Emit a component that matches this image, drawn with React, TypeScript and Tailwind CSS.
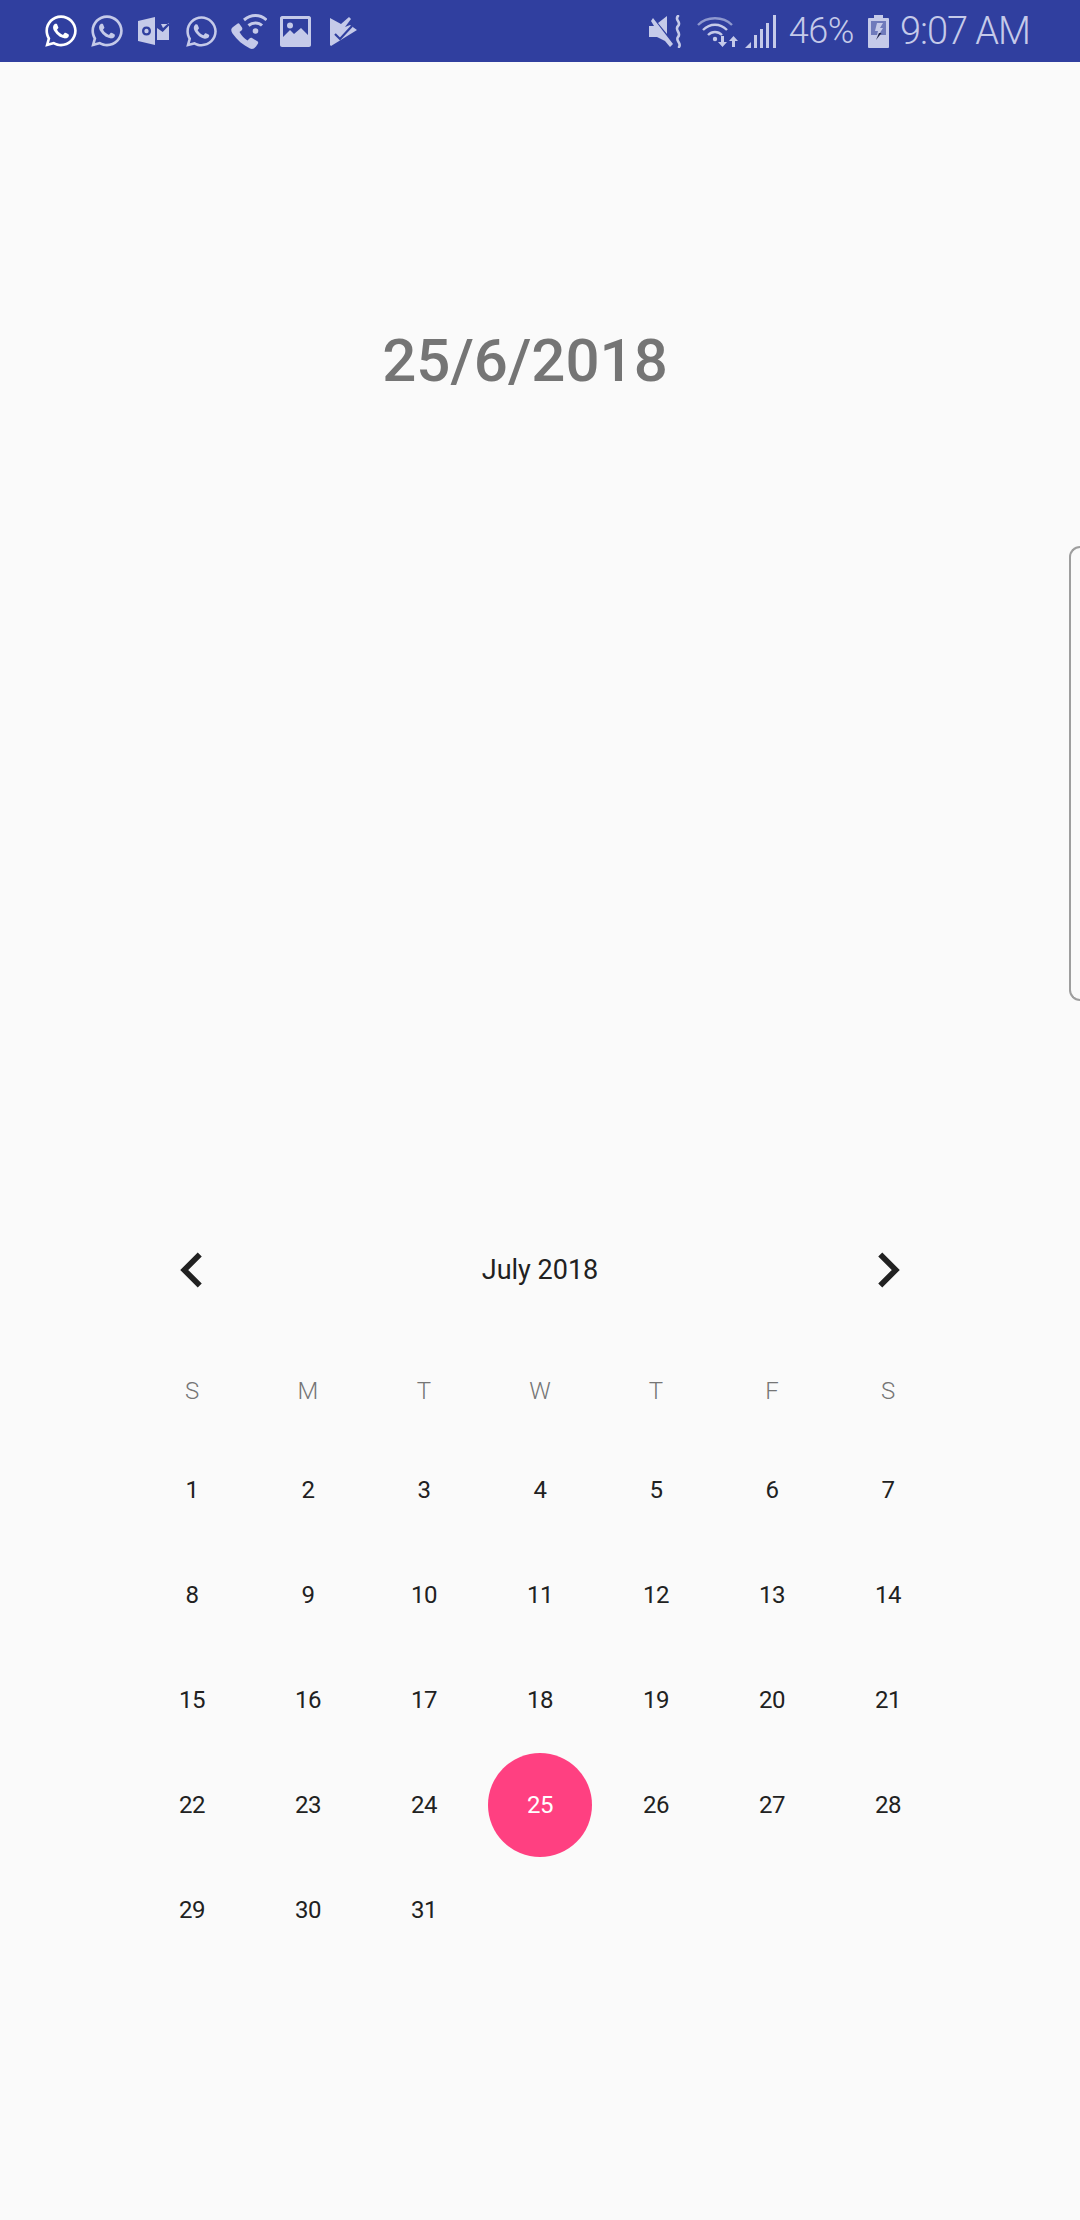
import { FaWhatsapp } from "react-icons/fa";
import { ChevronLeft, ChevronRight } from "lucide-react";

const weekDays = ["S", "M", "T", "W", "T", "F", "S"];
const days = Array.from({ length: 31 }, (_, i) => i + 1);

const OutlookIcon = () => (
  <svg viewBox="0 0 31 28" className="w-[31px] h-[28px] ml-[13px]">
    <path fill="#c5cae9" fillRule="evenodd" d="M0 4 L17 0 V28 L0 24 Z M8.5 9.5 C5.5 9.5 4 11.5 4 14 C4 16.5 5.5 18.5 8.5 18.5 C11.5 18.5 13 16.5 13 14 C13 11.5 11.5 9.5 8.5 9.5 Z M8.5 11.7 C10 11.7 10.6 12.7 10.6 14 C10.6 15.3 10 16.3 8.5 16.3 C7 16.3 6.4 15.3 6.4 14 C6.4 12.7 7 11.7 8.5 11.7 Z" />
    <path fill="#c5cae9" d="M19 7 H23 L25 11 L30 6.5 H31 V23 H19 V11 L24.7 15 L31 8.5 V7 Z" />
  </svg>
);

const WifiCallIcon = () => (
  <svg viewBox="0 0 36 36" className="w-[36px] h-[36px] ml-[12px]">
    <path fill="#c5cae9" d="M6 11 L2 14 C-0.5 16 0 18 1.5 20.5 C6 27 12 32 19 35.5 C21 36.5 23 36 25 33.5 L27 30.5 C27.5 29.5 27 28.5 26 28 L21 25 C20 24.5 19 25 18 26 L16.5 27.5 C13 25.5 10.5 22.5 8.5 19 L10.5 17.5 C11.5 16.5 11.5 15.5 11 14.5 L8.5 11 C8 10 7 10 6 11 Z" />
    <path fill="none" stroke="#c5cae9" strokeWidth="3" d="M13 7 C20 1 29 1 35.5 7" />
    <path fill="none" stroke="#c5cae9" strokeWidth="3" d="M17.5 12.5 C21.5 9 27.5 9 31 12.5" />
    <circle cx="24.5" cy="18" r="2.8" fill="#c5cae9" />
  </svg>
);

const ImageIcon = () => (
  <svg viewBox="0 0 31 31" className="w-[31px] h-[31px] ml-[13px]">
    <path fill="#c5cae9" fillRule="evenodd" d="M2 0 H29 C30 0 31 1 31 2 V29 C31 30 30 31 29 31 H2 C1 31 0 30 0 29 V2 C0 1 1 0 2 0 Z M3 3 V21 L10 14 L14 18 L21 12 L28 19 V3 Z" />
    <circle cx="10" cy="9.5" r="3" fill="#c5cae9" />
  </svg>
);

const TaskIcon = () => (
  <svg viewBox="0 0 27 29" className="w-[27px] h-[29px] ml-[19px]">
    <path fill="#c5cae9" d="M0 1 L11 7 L19 0 L21 2 L15 10 L20 8 L27 13 L1 29 L0 28 Z" />
    <path fill="none" stroke="#303f9f" strokeWidth="2.2" d="M5 17 L10 22 L22 9" />
  </svg>
);

const MuteIcon = () => (
  <svg viewBox="0 0 34 33" className="w-[34px] h-[33px]">
    <path fill="#c5cae9" d="M0 11 H5 L2 6 L4 3 L24 29 L21 32 L16 26 L8 22 H0 Z M9 8 L18 1 V19 Z" />
    <path fill="none" stroke="#c5cae9" strokeWidth="2.6" strokeLinecap="round" d="M29 1 C25 5 33 7 29 11 C25 15 33 18 29 22 C26 26 33 28 30 32" />
  </svg>
);

const WifiDataIcon = () => (
  <svg viewBox="0 0 43 31" className="w-[43px] h-[31px] ml-[14px]">
    <path fill="none" stroke="#8f99cf" strokeWidth="2.4" d="M1 9 C10 0 26 0 35 9" />
    <path fill="none" stroke="#c5cae9" strokeWidth="2.4" d="M6 14 C13 7 23 7 30 14" />
    <path fill="none" stroke="#c5cae9" strokeWidth="2.4" d="M11 19 C15 15 21 15 25 19" />
    <circle cx="18" cy="23" r="2.2" fill="#c5cae9" />
    <path fill="#c5cae9" d="M24 20 H27 V26 H30 L25.5 31 L21 26 H24 Z M35 31 H38 V25 H41 L36.5 20 L32 25 H35 Z" />
  </svg>
);

const SignalIcon = () => (
  <svg viewBox="0 0 32 33" className="w-[32px] h-[33px] ml-[5px]">
    <path fill="#c5cae9" d="M0 33 L6 27 V33 Z" />
    <rect x="9" y="20" width="3" height="13" fill="#c5cae9" />
    <rect x="15" y="14" width="3" height="19" fill="#c5cae9" />
    <rect x="21" y="8" width="3" height="25" fill="#c5cae9" />
    <rect x="28" y="0" width="3" height="33" fill="#c5cae9" />
  </svg>
);

const BatteryIcon = () => (
  <svg viewBox="0 0 21 33" className="w-[21px] h-[33px] ml-[14px]">
    <path fill="#c5cae9" d="M6 0 H15 V3 H20 C20.5 3 21 3.5 21 4 V32 C21 32.5 20.5 33 20 33 H1 C0.5 33 0 32.5 0 32 V4 C0 3.5 0.5 3 1 3 H6 Z" />
    <rect x="3" y="6" width="15" height="14" fill="#6f7abb" />
    <path fill="#c5cae9" d="M9 8 H15 L12 13 H15 L8 24 L10 16 H7 Z" />
    <path fill="#1f2347" d="M11 18 H13.5 L8 25 Z" />
  </svg>
);

const StatusBar = () => (
  <div className="h-[62px] bg-[#303f9f] flex items-center pl-[43px] shrink-0">
    <FaWhatsapp className="w-[36px] h-[36px] text-white" />
    <FaWhatsapp className="w-[36px] h-[36px] ml-[10px] text-[#c5cae9]" />
    <OutlookIcon />
    <FaWhatsapp className="w-[35px] h-[35px] ml-[15px] text-[#c5cae9]" />
    <WifiCallIcon />
    <ImageIcon />
    <TaskIcon />
    <div className="ml-auto flex items-center pr-[50px] text-[#c5cae9]">
      <MuteIcon />
      <WifiDataIcon />
      <SignalIcon />
      <span className="ml-[12px] text-[36px] leading-none font-light tracking-[-0.5px] font-['Roboto',sans-serif]">46%</span>
      <BatteryIcon />
      <span className="ml-[11px] text-[38px] leading-none font-light tracking-[-1px] font-['Roboto',sans-serif]">9:07 AM</span>
    </div>
  </div>
);

const Calendar = () => (
  <div className="w-[812px] mx-auto font-['Roboto',sans-serif]">
    <div className="h-[60px] flex items-center justify-between">
      <div className="w-[116px] flex justify-center">
        <ChevronLeft className="w-[62px] h-[62px] text-[#212121]" strokeWidth={2.2} strokeLinecap="butt" strokeLinejoin="miter" />
      </div>
      <span className="text-[27px] leading-none text-[#212121]">July 2018</span>
      <div className="w-[116px] flex justify-center">
        <ChevronRight className="w-[62px] h-[62px] text-[#212121]" strokeWidth={2.2} strokeLinecap="butt" strokeLinejoin="miter" />
      </div>
    </div>
    <div className="grid grid-cols-7 mt-[61px] h-[60px] items-center text-center text-[24px] leading-none font-light text-[#757575]">
      {weekDays.map((d, i) => (
        <span key={i}>{d}</span>
      ))}
    </div>
    <div className="grid grid-cols-7 auto-rows-[105px] mt-[16px] items-center justify-items-center text-[24px] leading-none tracking-[-0.5px] text-[#212121]">
      {days.map((d) =>
        d === 25 ? (
          <span key={d} className="w-[104px] h-[104px] rounded-full bg-[#ff4081] text-white flex items-center justify-center">
            {d}
          </span>
        ) : (
          <span key={d}>{d}</span>
        )
      )}
    </div>
  </div>
);

export default function App() {
  return (
    <div className="relative w-[1080px] h-[2220px] bg-[#fafafa] overflow-hidden flex flex-col">
      <StatusBar />
      <div className="pt-[261px] w-[1050px] text-center text-[60px] leading-[76px] font-medium text-[#757575] font-['Roboto',sans-serif]">
        25/6/2018
      </div>
      <div className="mt-[841px]">
        <Calendar />
      </div>
      {/* edge panel handle */}
      <div className="absolute right-0 top-[546px] w-[11px] h-[455px] border-2 border-r-0 border-[#9e9e9e] rounded-l-[14px]" />
    </div>
  );
}
